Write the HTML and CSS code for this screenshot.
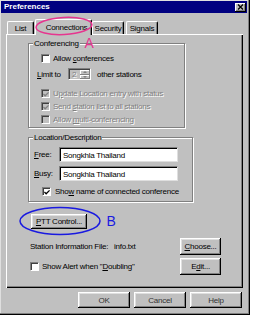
FILE: index.html
```html
<!DOCTYPE html>
<html>
<head>
<meta charset="utf-8">
<title>Preferences</title>
<link rel="stylesheet" href="styles.css">
</head>
<body>
<div class="window">
  <div class="titlebar">
    <span class="title">Preferences</span>
    <span class="close"><svg width="7" height="6" viewBox="0 0 7 6"><path d="M1 0.5 L6 5.5 M6 0.5 L1 5.5" stroke="#000" stroke-width="1.3" fill="none"/></svg></span>
  </div>
  <div class="tabs">
    <div class="tab tab-list">List</div>
    <div class="tab tab-active">Connections</div>
    <div class="tab tab-sec">Security</div>
    <div class="tab tab-sig">Signals</div>
  </div>
  <div class="panel">
    <div class="group group-conf">
      <span class="legend">Conferencing</span>
      <div class="check-row row-allow"><span class="cb"></span><span>Allow <u>c</u>onferences</span></div>
      <div class="limit-row">
        <span class="limit-label"><u>L</u>imit to</span>
        <span class="spin"><span class="spin-val">2</span><span class="spin-btns"><span class="spin-btn"><span class="arrow-up"></span></span><span class="spin-btn"><span class="arrow-down"></span></span></span></span>
        <span class="limit-after">other stations</span>
      </div>
      <div class="check-row disabled row-update"><span class="cb cb-dis"><svg width="7" height="7" viewBox="0 0 7 7"><path d="M0.5 3 L2.5 5 L6.5 1" fill="none" stroke="#808080" stroke-width="1.5"/></svg></span><span class="dis-text">U<u>p</u>date Location entry with status</span></div>
      <div class="check-row disabled row-send"><span class="cb cb-dis"><svg width="7" height="7" viewBox="0 0 7 7"><path d="M0.5 3 L2.5 5 L6.5 1" fill="none" stroke="#808080" stroke-width="1.5"/></svg></span><span class="dis-text">Send <u>s</u>tation list to all stations</span></div>
      <div class="check-row disabled row-multi"><span class="cb cb-dis"></span><span class="dis-text">Allow <u>m</u>ulti-conferencing</span></div>
    </div>
    <div class="group group-loc">
      <span class="legend">Location/Description</span>
      <div class="field-row row-free"><span class="field-label"><u>F</u>ree:</span><span class="input">Songkhla Thailand</span></div>
      <div class="field-row row-busy"><span class="field-label"><u>B</u>usy:</span><span class="input">Songkhla Thailand</span></div>
      <div class="check-row row-show"><span class="cb"><svg width="7" height="7" viewBox="0 0 7 7"><path d="M0.5 3 L2.5 5 L6.5 1" fill="none" stroke="#000" stroke-width="1.5"/></svg></span><span>Sho<u>w</u> name of connected conference</span></div>
    </div>
    <button class="btn btn-ptt"><u>P</u>TT Control...</button>
    <div class="file-grid">
      <span class="file-label">Station Information File:</span>
      <span class="file-value">info.txt</span>
      <button class="btn btn-side"><u>C</u>hoose...</button>
      <div class="check-row row-alert"><span class="cb"></span><span>Show Alert when "<u>D</u>oubling"</span></div>
      <button class="btn btn-side">E<u>d</u>it...</button>
    </div>
  </div>
  <div class="footer">
    <button class="btn btn-foot">OK</button>
    <button class="btn btn-foot">Cancel</button>
    <button class="btn btn-foot">Help</button>
  </div>
</div>
<svg class="annot" width="257" height="320" viewBox="0 0 257 320">
  <ellipse cx="64" cy="26" rx="28" ry="8.5" transform="rotate(-3 64 26)" fill="none" stroke="#e6358f" stroke-width="1.5"/>
  <text x="84.5" y="48" class="annot-a">A</text>
  <ellipse cx="60" cy="221" rx="40" ry="13.5" fill="none" stroke="#1a1ae0" stroke-width="1.5"/>
  <text x="106.5" y="226" class="annot-b">B</text>
</svg>
</body>
</html>
```
FILE: styles.css
```css
* { box-sizing: border-box; }
body {
  margin: 0;
  background: #fff;
  font-family: "Liberation Sans", Arial, sans-serif;
  font-size: 8px;
  letter-spacing: -0.25px;
  color: #000;
}
u { text-decoration-thickness: 1px; text-underline-offset: 1px; }

.window {
  position: relative;
  width: 250px;
  height: 315px;
  background: #c0c0c0;
  padding: 1px 3px 0 1px;
  box-shadow: inset -1px -1px #000, inset -2px -2px #808080, inset 1px 1px #dfdfdf;
}

.titlebar {
  display: flex;
  align-items: center;
  justify-content: space-between;
  height: 12px;
  background: #000080;
  color: #fff;
  padding: 0 1px 0 3px;
}
.title { font-weight: bold; letter-spacing: 0; line-height: 12px; }
.close {
  width: 11px;
  height: 9px;
  background: #c0c0c0;
  display: flex;
  align-items: center;
  justify-content: center;
  box-shadow: inset -1px -1px #000, inset 1px 1px #fff, inset -2px -2px #808080;
}

.tabs {
  position: relative;
  z-index: 1;
  display: flex;
  align-items: flex-end;
  height: 15px;
  margin-top: 6px;
  padding-left: 6px;
}
.tab {
  height: 13px;
  background: #c0c0c0;
  border: 1px solid #fff;
  border-bottom: 0;
  border-right-color: #000;
  border-radius: 2px 2px 0 0;
  box-shadow: inset -1px 0 #808080;
  text-align: center;
  line-height: 12px;
  padding-top: 1px;
}
.tab-list { width: 27px; }
.tab-active { width: 57px; margin-left: 1px; height: 16px; margin-bottom: -1px; padding-top: 2px; line-height: 11px; padding-left: 6px; }
.tab-sec { width: 32px; }
.tab-sig { width: 32px; margin-left: 2px; }

.panel {
  margin-left: 5px;
  width: 237px;
  height: 254px;
  padding: 9px 0 0 22px;
  display: flex;
  flex-direction: column;
  align-items: flex-start;
  box-shadow: inset 1px 1px #fff, inset -1px -1px #000, inset -2px -2px #808080;
}

.group {
  border: 1px solid #808080;
  box-shadow: 1px 1px #fff, inset 1px 1px #fff;
  display: flex;
  flex-direction: column;
  align-items: flex-start;
}
.legend {
  margin: -5px 0 0 4px;
  padding: 0 1px;
  background: #c0c0c0;
  height: 9px;
  line-height: 9px;
}
.group-conf { width: 157px; height: 85px; }
.group-loc { width: 165px; height: 65px; margin-top: 9px; }

.check-row {
  display: flex;
  align-items: center;
  gap: 3px;
  height: 9px;
  line-height: 9px;
  margin-left: 12px;
}
.cb {
  flex: none;
  width: 9px;
  height: 9px;
  background: #fff;
  border-top: 1px solid #808080;
  border-left: 1px solid #808080;
  border-right: 1px solid #fff;
  border-bottom: 1px solid #fff;
  box-shadow: inset 1px 1px #404040;
  display: flex;
  align-items: center;
  justify-content: center;
  padding: 1px 0 0 1px;
}
.cb svg { display: block; }
.cb-dis { background: #c0c0c0; }
.dis-text { color: #808080; text-shadow: 1px 1px #fff; }

.row-allow { margin-top: 6px; }
.row-update { margin-top: 9px; }
.row-send { margin-top: 4px; }
.row-multi { margin-top: 4px; }

.limit-row {
  display: flex;
  align-items: center;
  height: 12px;
  margin: 5px 0 0 8px;
}
.limit-label { width: 31px; }
.spin {
  width: 23px;
  height: 12px;
  display: flex;
  align-items: center;
  background: #c0c0c0;
  border-top: 1px solid #808080;
  border-left: 1px solid #808080;
  border-right: 1px solid #fff;
  border-bottom: 1px solid #fff;
  box-shadow: inset 1px 1px #404040;
  padding: 1px 0 0 3px;
}
.spin-val { flex: 1; color: #808080; text-shadow: 1px 1px #fff; }
.spin-btns { display: flex; flex-direction: column; width: 10px; height: 9px; }
.spin-btn {
  flex: 1;
  display: flex;
  align-items: center;
  justify-content: center;
  box-shadow: inset -1px -1px #808080, inset 1px 1px #fff;
}
.arrow-up { width: 0; height: 0; border-left: 2px solid transparent; border-right: 2px solid transparent; border-bottom: 2px solid #808080; }
.arrow-down { width: 0; height: 0; border-left: 2px solid transparent; border-right: 2px solid transparent; border-top: 2px solid #808080; }
.limit-after { margin-left: 6px; }

.field-row { display: flex; align-items: center; margin-left: 5px; }
.row-free { margin-top: 5px; }
.row-busy { margin-top: 4px; }
.field-label { width: 25px; }
.input {
  width: 119px;
  height: 15px;
  background: #fff;
  border-top: 1px solid #808080;
  border-left: 1px solid #808080;
  border-right: 1px solid #dfdfdf;
  border-bottom: 1px solid #dfdfdf;
  box-shadow: inset 1px 1px #000;
  padding: 1px 0 0 3px;
  display: flex;
  align-items: center;
}
.row-show { margin: 6px 0 0 13px; gap: 4px; }

.btn {
  font: inherit;
  letter-spacing: inherit;
  color: #000;
  background: #c0c0c0;
  border: 0;
  padding: 0;
  margin: 0;
  box-shadow: inset -1px -1px #000, inset 1px 1px #fff, inset -2px -2px #808080, inset 2px 2px #dfdfdf;
}
.btn-ptt { width: 56px; height: 15px; margin: 12px 0 0 3px; }

.file-grid {
  display: grid;
  grid-template-columns: 84px 66px 41px;
  grid-template-rows: 17px 17px;
  row-gap: 3px;
  align-items: center;
  margin: 9px 0 0 2px;
}
.btn-side { width: 41px; height: 17px; }
.row-alert { grid-column: 1 / 3; margin-left: 0; }

.footer {
  display: flex;
  justify-content: flex-end;
  gap: 4px;
  margin-top: 4px;
  padding-right: 5px;
}
.btn-foot { width: 52px; height: 16px; color: #333; }

.annot { position: absolute; left: 0; top: 0; z-index: 2; pointer-events: none; }
.annot-a { fill: #e6358f; font-family: "Liberation Sans", Arial, sans-serif; font-size: 14px; letter-spacing: 0; }
.annot-b { fill: #1a1ae0; font-family: "Liberation Sans", Arial, sans-serif; font-size: 14px; letter-spacing: 0; }
```
